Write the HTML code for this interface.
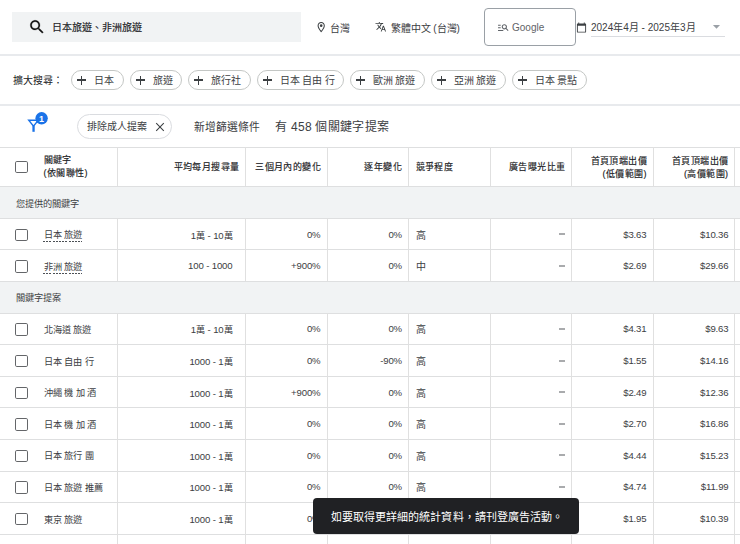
<!DOCTYPE html>
<html lang="zh-TW"><head><meta charset="utf-8"><style>
*{box-sizing:border-box;margin:0;padding:0}
html,body{width:740px;height:544px;overflow:hidden;background:#fff}
body{position:relative;font-family:"Liberation Sans",sans-serif;color:#3c4043;}
.a{position:absolute;white-space:nowrap}
svg{position:absolute;display:block}
.chip{position:absolute;border:1px solid #c4c7c5;border-radius:10px;height:19.5px}
.chip .pl{position:absolute;left:5.3px;top:4.5px;width:9px;height:9px}
.chip .pl:before{content:"";position:absolute;left:0;top:3.8px;width:9px;height:1.4px;background:#3c4043}
.chip .pl:after{content:"";position:absolute;left:3.8px;top:0;width:1.4px;height:9px;background:#3c4043}
.chip span{position:absolute;left:21.5px;top:3px;font-size:10px;line-height:14px;color:#3c4043}
.vl{position:absolute;width:1px;background:#e0e0e0}
.hl{position:absolute;height:1px;background:#dedfe0;left:0;width:740px}
.cb{position:absolute;left:15.3px;width:12.8px;height:12.4px;border:1.8px solid #646669;border-radius:1.8px}
.t{position:absolute;white-space:nowrap;font-size:9.2px;line-height:12px;color:#3c4043}
.n{font-size:9.6px;letter-spacing:-0.15px}
.th{font-size:9.6px}
.dl{position:absolute;height:1px;background:repeating-linear-gradient(90deg,#4d5156 0 2.1px,transparent 2.1px 3.2px)}
.r{text-align:right}
</style></head><body>
<div class="a" style="left:12px;top:12px;width:289px;height:30px;background:#f1f3f4"></div>
<svg style="left:28px;top:18px" width="18" height="18" viewBox="0 0 24 24"><path fill="#111" stroke="#111" stroke-width="0.3" d="M15.5 14h-.79l-.28-.27C15.41 12.59 16 11.11 16 9.5 16 5.91 13.09 3 9.5 3S3 5.91 3 9.5 5.91 16 9.5 16c1.61 0 3.09-.59 4.23-1.57l.27.28v.79l5 4.99L20.49 19l-4.99-5zm-6 0C7.010 14 5 11.99 5 9.5S7.01 5 9.5 5 14 7.01 14 9.5 11.99 14 9.5 14z"/></svg>
<div class="a" style="left:51.5px;top:21px;font-size:10px;line-height:14px;color:#202124;-webkit-text-stroke:0.15px #202124">日本旅遊、非洲旅遊</div>
<svg style="left:314.8px;top:20.9px" width="12.4" height="12.4" viewBox="0 0 24 24"><path fill="#3c4043" d="M12 2C8.13 2 5 5.13 5 9c0 5.25 7 13 7 13s7-7.75 7-13c0-3.87-3.13-7-7-7zM7 9c0-2.76 2.24-5 5-5s5 2.24 5 5c0 2.88-2.88 7.19-5 9.88C9.92 16.21 7 11.85 7 9z"/><circle fill="#3c4043" cx="12" cy="9" r="2.5"/></svg>
<div class="a" style="left:330px;top:21.5px;font-size:10px;line-height:14px">台灣</div>
<svg style="left:375px;top:21px" width="11.5" height="11.5" viewBox="0 0 24 24"><path fill="#3c4043" d="M12.87 15.07l-2.54-2.51.03-.03c1.74-1.94 2.98-4.17 3.71-6.53H17V4h-7V2H8v2H1v1.99h11.17C11.5 7.92 10.44 9.75 9 11.35 8.07 10.32 7.3 9.19 6.69 8h-2c.73 1.63 1.73 3.17 2.98 4.56l-5.09 5.02L4 19l5-5 3.11 3.11.76-2.040zM18.5 10h-2L12 22h2l1.12-3h4.75L21 22h2l-4.5-12zm-2.62 7l1.62-4.33L19.12 17h-3.24z"/></svg>
<div class="a" style="left:390.5px;top:21.5px;font-size:10px;line-height:14px">繁體中文 (台灣)</div>
<div class="a" style="left:484px;top:8px;width:92px;height:38px;border:1.5px solid #9aa0a6;border-radius:4px"></div>
<svg style="left:497px;top:21px" width="12.6" height="12.6" viewBox="0 0 24 24"><path fill="#5f6368" d="M7 9H2V7h5v2zm0 3H2v2h5v-2zm13.59 7l-3.83-3.830c-.8.52-1.74.83-2.76.83-2.76 0-5-2.24-5-5s2.24-5 5-5 5 2.24 5 5c0 1.02-.31 1.96-.83 2.75L22 17.59 20.59 19zM17 11c0-1.65-1.35-3-3-3s-3 1.35-3 3 1.35 3 3 3 3-1.35 3-3zM2 19h10v-2H2v2z"/></svg>
<div class="a" style="left:512px;top:21px;font-size:10px;line-height:14px;color:#5f6368">Google</div>
<svg style="left:576px;top:21.5px" width="11" height="11" viewBox="0 0 24 24"><path fill="#3c4043" d="M20 3h-1V1h-2v2H7V1H5v2H4c-1.1 0-2 .9-2 2v16c0 1.1.9 2 2 2h16c1.1 0 2-.9 2-2V5c0-1.1-.9-2-2-2zm0 18H4V8h16v13z"/></svg>
<div class="a" style="left:591px;top:21px;font-size:10px;line-height:14px">2024年4月 - 2025年3月</div>
<svg style="left:708px;top:18px" width="17" height="17" viewBox="0 0 24 24"><path fill="#9aa0a6" d="M7 10l5 5 5-5z"/></svg>
<div class="a" style="left:591px;top:36px;width:134px;height:1px;background:#dadce0"></div>
<div class="a" style="left:0;top:54px;width:740px;height:1.5px;background:#e8eaed"></div>
<div class="a" style="left:13px;top:73.5px;font-size:10px;line-height:14px;color:#202124">擴大搜尋：</div>
<div class="chip" style="left:71px;top:70px;width:53px"><i class="pl"></i><span>日本</span></div>
<div class="chip" style="left:130px;top:70px;width:52px"><i class="pl"></i><span>旅遊</span></div>
<div class="chip" style="left:188px;top:70px;width:63px"><i class="pl"></i><span>旅行社</span></div>
<div class="chip" style="left:257px;top:70px;width:87px"><i class="pl"></i><span>日本 自由 行</span></div>
<div class="chip" style="left:350px;top:70px;width:75px"><i class="pl"></i><span>歐洲 旅遊</span></div>
<div class="chip" style="left:431px;top:70px;width:75px"><i class="pl"></i><span>亞洲 旅遊</span></div>
<div class="chip" style="left:512px;top:70px;width:75px"><i class="pl"></i><span>日本 景點</span></div>
<div class="a" style="left:0;top:104px;width:740px;height:1.5px;background:#e8eaed"></div>
<svg style="left:26px;top:110px" width="24" height="24" viewBox="0 0 24 24"><path fill="none" stroke="#1a73e8" stroke-width="1.4" d="M2.7 10.2h9.6l-4.8 6z"/><rect x="6.4" y="15.5" width="2.3" height="6.3" fill="#1a73e8"/><circle cx="15.6" cy="8.3" r="6.2" fill="#1a73e8"/><text x="15.6" y="11.5" font-size="9" fill="#fff" text-anchor="middle" font-family="Liberation Sans" font-weight="bold">1</text></svg>
<div class="a" style="left:77px;top:114px;width:95px;height:24.5px;border:1px solid #dadce0;border-radius:12.5px"></div>
<div class="a" style="left:87px;top:119.5px;font-size:10px;line-height:14px">排除成人提案</div>
<svg style="left:155px;top:122px" width="10" height="10" viewBox="0 0 10 10"><path stroke="#3c4043" stroke-width="1.05" d="M1.2 1.2l7.6 7.6M8.8 1.2l-7.6 7.6"/></svg>
<div class="a" style="left:194px;top:120px;font-size:10.8px;line-height:14px">新增篩選條件</div>
<div class="a" style="left:275px;top:118.5px;font-size:12px;letter-spacing:0.3px;line-height:16px">有 458 個關鍵字提案</div>
<div class="hl" style="top:146.9px"></div>
<div class="cb" style="top:160.7px"></div>
<div class="t" style="left:43.5px;top:154px;line-height:13px;color:#202124;font-size:9px;letter-spacing:0.4px;-webkit-text-stroke:0.15px #202124">關鍵字<br>(依關聯性)</div>
<div class="t r" style="right:500.5px;top:161px;color:#202124;font-size:9px;letter-spacing:0.4px;-webkit-text-stroke:0.15px #202124">平均每月搜尋量</div>
<div class="t r" style="right:419px;top:161px;color:#202124;font-size:9px;letter-spacing:0.4px;-webkit-text-stroke:0.15px #202124">三個月內的變化</div>
<div class="t r" style="right:338px;top:161px;color:#202124;font-size:9px;letter-spacing:0.4px;-webkit-text-stroke:0.15px #202124">逐年變化</div>
<div class="t" style="left:415.5px;top:161px;color:#202124;font-size:9px;letter-spacing:0.4px;-webkit-text-stroke:0.15px #202124">競爭程度</div>
<div class="t r" style="right:174.5px;top:161px;color:#202124;font-size:9px;letter-spacing:0.4px;-webkit-text-stroke:0.15px #202124">廣告曝光比重</div>
<div class="t r" style="right:93px;top:155px;color:#202124;font-size:9px;letter-spacing:0.4px;-webkit-text-stroke:0.15px #202124;line-height:12.5px">首頁頂端出價<br>(低價範圍)</div>
<div class="t r" style="right:11.5px;top:155px;color:#202124;font-size:9px;letter-spacing:0.4px;-webkit-text-stroke:0.15px #202124;line-height:12.5px">首頁頂端出價<br>(高價範圍)</div>
<div class="hl" style="top:186.0px"></div>
<div class="a" style="left:0;top:186.5px;width:740px;height:31.6px;background:#f1f3f4"></div>
<div class="a" style="left:0;top:281.3px;width:740px;height:31.6px;background:#f1f3f4"></div>
<div class="vl" style="left:117px;top:147.4px;height:39.099999999999994px"></div>
<div class="vl" style="left:245px;top:147.4px;height:39.099999999999994px"></div>
<div class="vl" style="left:326.5px;top:147.4px;height:39.099999999999994px"></div>
<div class="vl" style="left:407.5px;top:147.4px;height:39.099999999999994px"></div>
<div class="vl" style="left:489.5px;top:147.4px;height:39.099999999999994px"></div>
<div class="vl" style="left:571px;top:147.4px;height:39.099999999999994px"></div>
<div class="vl" style="left:652.5px;top:147.4px;height:39.099999999999994px"></div>
<div class="vl" style="left:734px;top:147.4px;height:39.099999999999994px"></div>
<div class="hl" style="top:217.79999999999998px"></div>
<div class="vl" style="left:117px;top:218.1px;height:31.6px"></div>
<div class="vl" style="left:245px;top:218.1px;height:31.6px"></div>
<div class="vl" style="left:326.5px;top:218.1px;height:31.6px"></div>
<div class="vl" style="left:407.5px;top:218.1px;height:31.6px"></div>
<div class="vl" style="left:489.5px;top:218.1px;height:31.6px"></div>
<div class="vl" style="left:571px;top:218.1px;height:31.6px"></div>
<div class="vl" style="left:652.5px;top:218.1px;height:31.6px"></div>
<div class="vl" style="left:734px;top:218.1px;height:31.6px"></div>
<div class="hl" style="top:249.39999999999998px"></div>
<div class="vl" style="left:117px;top:249.7px;height:31.6px"></div>
<div class="vl" style="left:245px;top:249.7px;height:31.6px"></div>
<div class="vl" style="left:326.5px;top:249.7px;height:31.6px"></div>
<div class="vl" style="left:407.5px;top:249.7px;height:31.6px"></div>
<div class="vl" style="left:489.5px;top:249.7px;height:31.6px"></div>
<div class="vl" style="left:571px;top:249.7px;height:31.6px"></div>
<div class="vl" style="left:652.5px;top:249.7px;height:31.6px"></div>
<div class="vl" style="left:734px;top:249.7px;height:31.6px"></div>
<div class="hl" style="top:281.0px"></div>
<div class="hl" style="top:312.6px"></div>
<div class="vl" style="left:117px;top:312.9px;height:31.6px"></div>
<div class="vl" style="left:245px;top:312.9px;height:31.6px"></div>
<div class="vl" style="left:326.5px;top:312.9px;height:31.6px"></div>
<div class="vl" style="left:407.5px;top:312.9px;height:31.6px"></div>
<div class="vl" style="left:489.5px;top:312.9px;height:31.6px"></div>
<div class="vl" style="left:571px;top:312.9px;height:31.6px"></div>
<div class="vl" style="left:652.5px;top:312.9px;height:31.6px"></div>
<div class="vl" style="left:734px;top:312.9px;height:31.6px"></div>
<div class="hl" style="top:344.2px"></div>
<div class="vl" style="left:117px;top:344.5px;height:31.6px"></div>
<div class="vl" style="left:245px;top:344.5px;height:31.6px"></div>
<div class="vl" style="left:326.5px;top:344.5px;height:31.6px"></div>
<div class="vl" style="left:407.5px;top:344.5px;height:31.6px"></div>
<div class="vl" style="left:489.5px;top:344.5px;height:31.6px"></div>
<div class="vl" style="left:571px;top:344.5px;height:31.6px"></div>
<div class="vl" style="left:652.5px;top:344.5px;height:31.6px"></div>
<div class="vl" style="left:734px;top:344.5px;height:31.6px"></div>
<div class="hl" style="top:375.8px"></div>
<div class="vl" style="left:117px;top:376.1px;height:31.6px"></div>
<div class="vl" style="left:245px;top:376.1px;height:31.6px"></div>
<div class="vl" style="left:326.5px;top:376.1px;height:31.6px"></div>
<div class="vl" style="left:407.5px;top:376.1px;height:31.6px"></div>
<div class="vl" style="left:489.5px;top:376.1px;height:31.6px"></div>
<div class="vl" style="left:571px;top:376.1px;height:31.6px"></div>
<div class="vl" style="left:652.5px;top:376.1px;height:31.6px"></div>
<div class="vl" style="left:734px;top:376.1px;height:31.6px"></div>
<div class="hl" style="top:407.40000000000003px"></div>
<div class="vl" style="left:117px;top:407.70000000000005px;height:31.6px"></div>
<div class="vl" style="left:245px;top:407.70000000000005px;height:31.6px"></div>
<div class="vl" style="left:326.5px;top:407.70000000000005px;height:31.6px"></div>
<div class="vl" style="left:407.5px;top:407.70000000000005px;height:31.6px"></div>
<div class="vl" style="left:489.5px;top:407.70000000000005px;height:31.6px"></div>
<div class="vl" style="left:571px;top:407.70000000000005px;height:31.6px"></div>
<div class="vl" style="left:652.5px;top:407.70000000000005px;height:31.6px"></div>
<div class="vl" style="left:734px;top:407.70000000000005px;height:31.6px"></div>
<div class="hl" style="top:439.00000000000006px"></div>
<div class="vl" style="left:117px;top:439.3px;height:31.6px"></div>
<div class="vl" style="left:245px;top:439.3px;height:31.6px"></div>
<div class="vl" style="left:326.5px;top:439.3px;height:31.6px"></div>
<div class="vl" style="left:407.5px;top:439.3px;height:31.6px"></div>
<div class="vl" style="left:489.5px;top:439.3px;height:31.6px"></div>
<div class="vl" style="left:571px;top:439.3px;height:31.6px"></div>
<div class="vl" style="left:652.5px;top:439.3px;height:31.6px"></div>
<div class="vl" style="left:734px;top:439.3px;height:31.6px"></div>
<div class="hl" style="top:470.6px"></div>
<div class="vl" style="left:117px;top:470.90000000000003px;height:31.6px"></div>
<div class="vl" style="left:245px;top:470.90000000000003px;height:31.6px"></div>
<div class="vl" style="left:326.5px;top:470.90000000000003px;height:31.6px"></div>
<div class="vl" style="left:407.5px;top:470.90000000000003px;height:31.6px"></div>
<div class="vl" style="left:489.5px;top:470.90000000000003px;height:31.6px"></div>
<div class="vl" style="left:571px;top:470.90000000000003px;height:31.6px"></div>
<div class="vl" style="left:652.5px;top:470.90000000000003px;height:31.6px"></div>
<div class="vl" style="left:734px;top:470.90000000000003px;height:31.6px"></div>
<div class="hl" style="top:502.20000000000005px"></div>
<div class="vl" style="left:117px;top:502.5px;height:31.6px"></div>
<div class="vl" style="left:245px;top:502.5px;height:31.6px"></div>
<div class="vl" style="left:326.5px;top:502.5px;height:31.6px"></div>
<div class="vl" style="left:407.5px;top:502.5px;height:31.6px"></div>
<div class="vl" style="left:489.5px;top:502.5px;height:31.6px"></div>
<div class="vl" style="left:571px;top:502.5px;height:31.6px"></div>
<div class="vl" style="left:652.5px;top:502.5px;height:31.6px"></div>
<div class="vl" style="left:734px;top:502.5px;height:31.6px"></div>
<div class="hl" style="top:533.8000000000001px"></div>
<div class="vl" style="left:117px;top:534.1px;height:31.6px"></div>
<div class="vl" style="left:245px;top:534.1px;height:31.6px"></div>
<div class="vl" style="left:326.5px;top:534.1px;height:31.6px"></div>
<div class="vl" style="left:407.5px;top:534.1px;height:31.6px"></div>
<div class="vl" style="left:489.5px;top:534.1px;height:31.6px"></div>
<div class="vl" style="left:571px;top:534.1px;height:31.6px"></div>
<div class="vl" style="left:652.5px;top:534.1px;height:31.6px"></div>
<div class="vl" style="left:734px;top:534.1px;height:31.6px"></div>
<div class="hl" style="top:565.4000000000001px"></div>
<div class="t" style="left:15.5px;top:197.5px;">您提供的關鍵字</div>
<div class="cb" style="top:228.6px"></div>
<div class="t" style="left:43.5px;top:229.1px;">日本 旅遊</div>
<div class="dl" style="left:43px;top:240.9px;width:38.5px"></div>
<div class="t r" style="right:507.5px;top:229.6px;"><span class="n">1</span>萬 <span class="n">-</span> <span class="n">10</span>萬</div>
<div class="t r" style="right:419.5px;top:228.6px;"><span class="n">0%</span></div>
<div class="t r" style="right:338px;top:228.6px;"><span class="n">0%</span></div>
<div class="t" style="left:415.5px;top:229.6px;font-size:10px">高</div>
<div class="a" style="left:559px;top:233px;width:6px;height:2px;background:#a9abad"></div>
<div class="t r" style="right:93.5px;top:228.6px;"><span class="n">$3.63</span></div>
<div class="t r" style="right:11.5px;top:228.6px;"><span class="n">$10.36</span></div>
<div class="cb" style="top:260.2px"></div>
<div class="t" style="left:43.5px;top:260.7px;">非洲 旅遊</div>
<div class="dl" style="left:43px;top:272.5px;width:38.5px"></div>
<div class="t r" style="right:507.5px;top:260.2px;"><span class="n">100</span> <span class="n">-</span> <span class="n">1000</span></div>
<div class="t r" style="right:419.5px;top:260.2px;"><span class="n">+900%</span></div>
<div class="t r" style="right:338px;top:260.2px;"><span class="n">0%</span></div>
<div class="t" style="left:415.5px;top:261.2px;font-size:10px">中</div>
<div class="a" style="left:559px;top:265px;width:6px;height:2px;background:#a9abad"></div>
<div class="t r" style="right:93.5px;top:260.2px;"><span class="n">$2.69</span></div>
<div class="t r" style="right:11.5px;top:260.2px;"><span class="n">$29.66</span></div>
<div class="t" style="left:15.5px;top:292.3px;">關鍵字提案</div>
<div class="cb" style="top:323.4px"></div>
<div class="t" style="left:43.5px;top:323.9px;">北海道 旅遊</div>
<div class="t r" style="right:507.5px;top:324.4px;"><span class="n">1</span>萬 <span class="n">-</span> <span class="n">10</span>萬</div>
<div class="t r" style="right:419.5px;top:323.4px;"><span class="n">0%</span></div>
<div class="t r" style="right:338px;top:323.4px;"><span class="n">0%</span></div>
<div class="t" style="left:415.5px;top:324.4px;font-size:10px">高</div>
<div class="a" style="left:559px;top:328px;width:6px;height:2px;background:#a9abad"></div>
<div class="t r" style="right:93.5px;top:323.4px;"><span class="n">$4.31</span></div>
<div class="t r" style="right:11.5px;top:323.4px;"><span class="n">$9.63</span></div>
<div class="cb" style="top:355.0px"></div>
<div class="t" style="left:43.5px;top:355.5px;">日本 自由 行</div>
<div class="t r" style="right:507.5px;top:356.0px;"><span class="n">1000</span> <span class="n">-</span> <span class="n">1</span>萬</div>
<div class="t r" style="right:419.5px;top:355.0px;"><span class="n">0%</span></div>
<div class="t r" style="right:338px;top:355.0px;"><span class="n">-90%</span></div>
<div class="t" style="left:415.5px;top:356.0px;font-size:10px">高</div>
<div class="a" style="left:559px;top:360px;width:6px;height:2px;background:#a9abad"></div>
<div class="t r" style="right:93.5px;top:355.0px;"><span class="n">$1.55</span></div>
<div class="t r" style="right:11.5px;top:355.0px;"><span class="n">$14.16</span></div>
<div class="cb" style="top:386.6px"></div>
<div class="t" style="left:43.5px;top:387.1px;">沖繩 機 加 酒</div>
<div class="t r" style="right:507.5px;top:387.6px;"><span class="n">1000</span> <span class="n">-</span> <span class="n">1</span>萬</div>
<div class="t r" style="right:419.5px;top:386.6px;"><span class="n">+900%</span></div>
<div class="t r" style="right:338px;top:386.6px;"><span class="n">0%</span></div>
<div class="t" style="left:415.5px;top:387.6px;font-size:10px">高</div>
<div class="a" style="left:559px;top:391px;width:6px;height:2px;background:#a9abad"></div>
<div class="t r" style="right:93.5px;top:386.6px;"><span class="n">$2.49</span></div>
<div class="t r" style="right:11.5px;top:386.6px;"><span class="n">$12.36</span></div>
<div class="cb" style="top:418.20000000000005px"></div>
<div class="t" style="left:43.5px;top:418.70000000000005px;">日本 機 加 酒</div>
<div class="t r" style="right:507.5px;top:419.20000000000005px;"><span class="n">1000</span> <span class="n">-</span> <span class="n">1</span>萬</div>
<div class="t r" style="right:419.5px;top:418.20000000000005px;"><span class="n">0%</span></div>
<div class="t r" style="right:338px;top:418.20000000000005px;"><span class="n">0%</span></div>
<div class="t" style="left:415.5px;top:419.20000000000005px;font-size:10px">高</div>
<div class="a" style="left:559px;top:423px;width:6px;height:2px;background:#a9abad"></div>
<div class="t r" style="right:93.5px;top:418.20000000000005px;"><span class="n">$2.70</span></div>
<div class="t r" style="right:11.5px;top:418.20000000000005px;"><span class="n">$16.86</span></div>
<div class="cb" style="top:449.8px"></div>
<div class="t" style="left:43.5px;top:450.3px;">日本 旅行 團</div>
<div class="t r" style="right:507.5px;top:450.8px;"><span class="n">1000</span> <span class="n">-</span> <span class="n">1</span>萬</div>
<div class="t r" style="right:419.5px;top:449.8px;"><span class="n">0%</span></div>
<div class="t r" style="right:338px;top:449.8px;"><span class="n">0%</span></div>
<div class="t" style="left:415.5px;top:450.8px;font-size:10px">高</div>
<div class="a" style="left:559px;top:454px;width:6px;height:2px;background:#a9abad"></div>
<div class="t r" style="right:93.5px;top:449.8px;"><span class="n">$4.44</span></div>
<div class="t r" style="right:11.5px;top:449.8px;"><span class="n">$15.23</span></div>
<div class="cb" style="top:481.40000000000003px"></div>
<div class="t" style="left:43.5px;top:481.90000000000003px;">日本 旅遊 推薦</div>
<div class="t r" style="right:507.5px;top:482.40000000000003px;"><span class="n">1000</span> <span class="n">-</span> <span class="n">1</span>萬</div>
<div class="t r" style="right:419.5px;top:481.40000000000003px;"><span class="n">0%</span></div>
<div class="t r" style="right:338px;top:481.40000000000003px;"><span class="n">0%</span></div>
<div class="t" style="left:415.5px;top:482.40000000000003px;font-size:10px">高</div>
<div class="a" style="left:559px;top:486px;width:6px;height:2px;background:#a9abad"></div>
<div class="t r" style="right:93.5px;top:481.40000000000003px;"><span class="n">$4.74</span></div>
<div class="t r" style="right:11.5px;top:481.40000000000003px;"><span class="n">$11.99</span></div>
<div class="cb" style="top:513.0px"></div>
<div class="t" style="left:43.5px;top:513.5px;">東京 旅遊</div>
<div class="t r" style="right:507.5px;top:514.0px;"><span class="n">1000</span> <span class="n">-</span> <span class="n">1</span>萬</div>
<div class="t r" style="right:419.5px;top:513.0px;"><span class="n">0%</span></div>
<div class="t r" style="right:338px;top:513.0px;"><span class="n">0%</span></div>
<div class="t" style="left:415.5px;top:514.0px;font-size:10px">高</div>
<div class="a" style="left:559px;top:518px;width:6px;height:2px;background:#a9abad"></div>
<div class="t r" style="right:93.5px;top:513.0px;"><span class="n">$1.95</span></div>
<div class="t r" style="right:11.5px;top:513.0px;"><span class="n">$10.39</span></div>
<div class="cb" style="top:544.6px"></div>
<div class="t" style="left:43.5px;top:545.1px;"></div>
<div class="t r" style="right:507.5px;top:544.6px;"></div>
<div class="t r" style="right:419.5px;top:544.6px;"></div>
<div class="t r" style="right:338px;top:544.6px;"></div>
<div class="t" style="left:415.5px;top:545.6px;font-size:10px"></div>
<div class="a" style="left:559px;top:549px;width:6px;height:2px;background:#a9abad"></div>
<div class="t r" style="right:93.5px;top:544.6px;"></div>
<div class="t r" style="right:11.5px;top:544.6px;"></div>
<div class="a" style="left:313px;top:498px;width:266px;height:36px;background:#202124;border-radius:4px"></div>
<div class="a" style="left:330.5px;top:510px;font-size:11px;letter-spacing:0.1px;line-height:14px;color:#fff">如要取得更詳細的統計資料，請刊登廣告活動。</div>
</body></html>
